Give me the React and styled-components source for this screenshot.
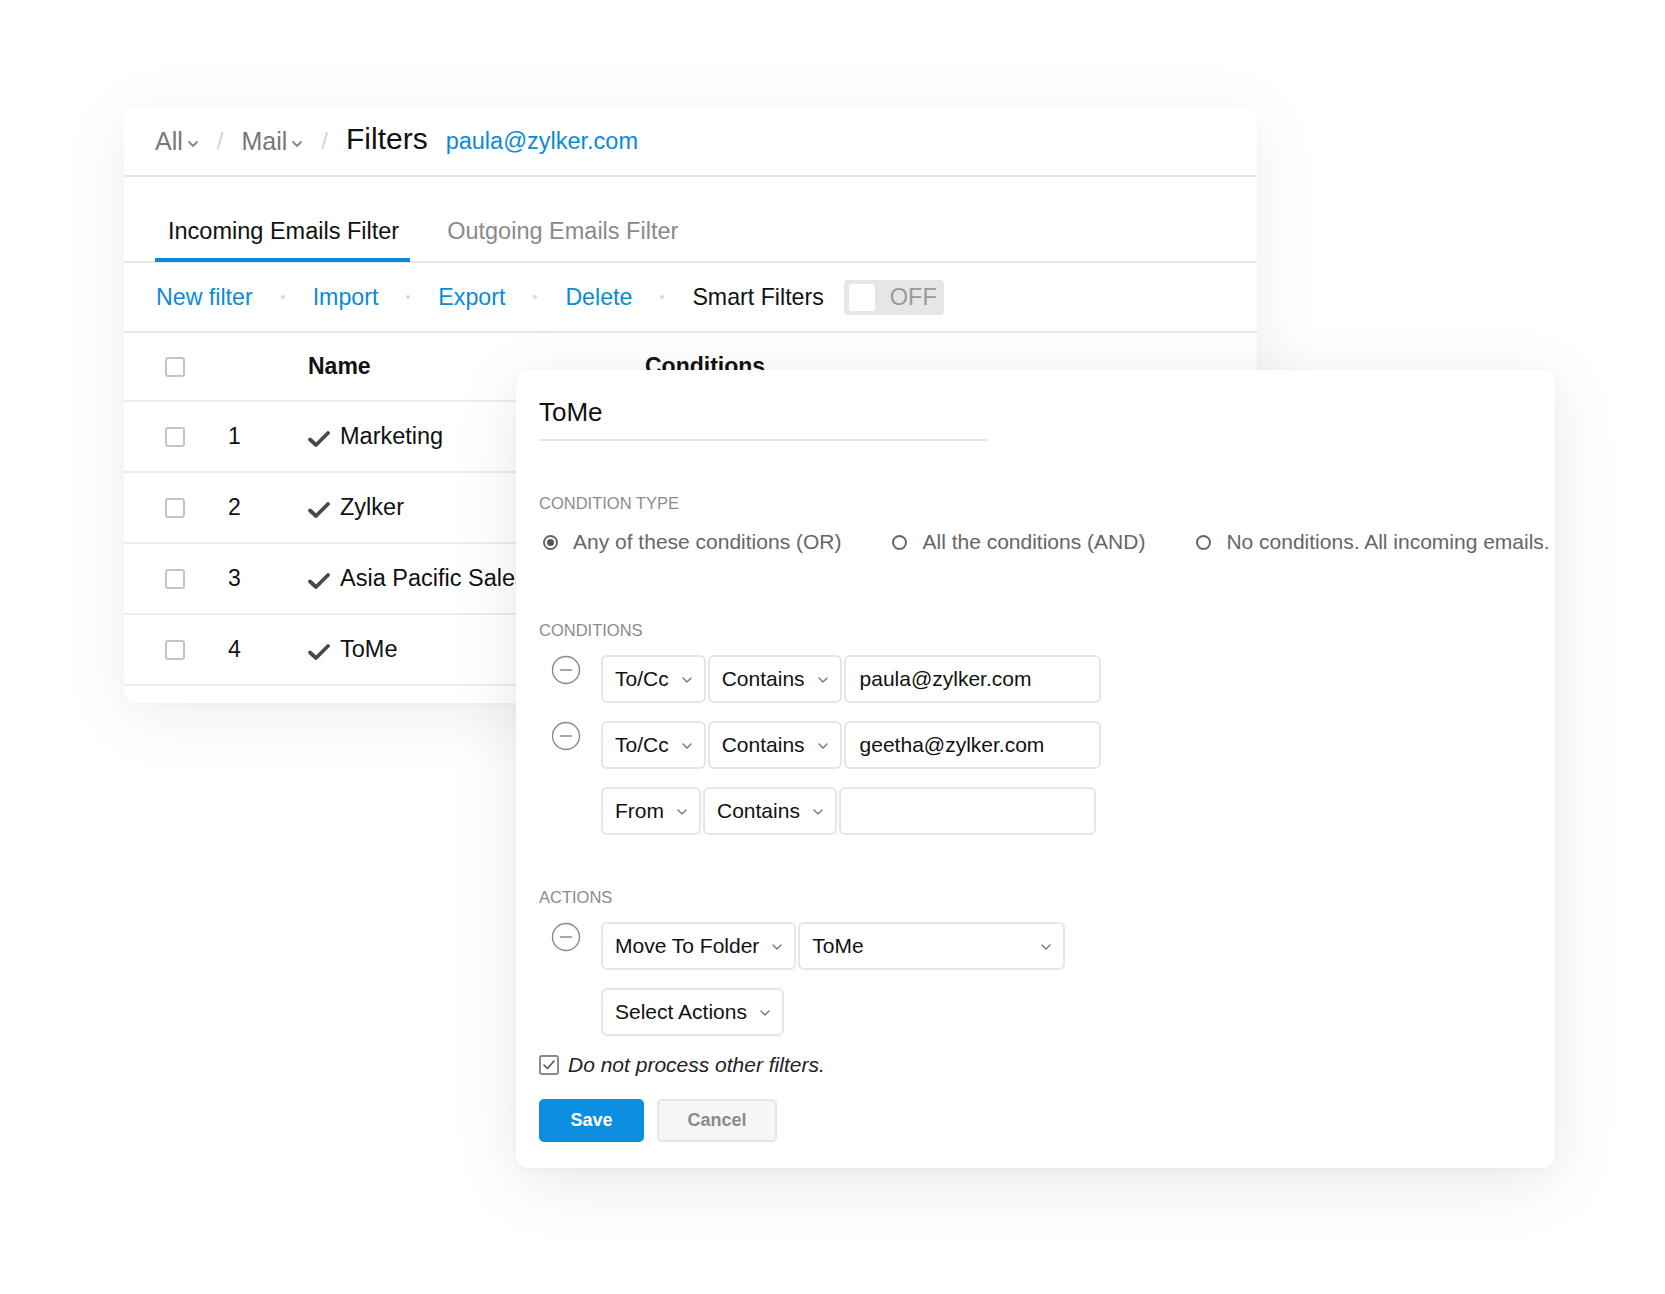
import React from 'react';
import styled, { createGlobalStyle } from 'styled-components';

const GlobalStyle = createGlobalStyle`
  html, body {
    margin: 0;
    padding: 0;
    background: #ffffff;
  }
  body {
    font-family: "Liberation Sans", Arial, Helvetica, sans-serif;
    color: #111;
  }
`;

const BLUE = '#0b8ad9';

const rows = [
    { id: 1, name: 'Marketing' },
    { id: 2, name: 'Zylker' },
    { id: 3, name: 'Asia Pacific Sales' },
    { id: 4, name: 'ToMe' },
];

const conditions = [
    { field: 'To/Cc', op: 'Contains', value: 'paula@zylker.com', removable: true },
    { field: 'To/Cc', op: 'Contains', value: 'geetha@zylker.com', removable: true },
    { field: 'From', op: 'Contains', value: '', removable: false },
];

//small icons
const Chevron = ({ size = 10, color = '#777', weight = 1.4 }) => (
    <svg width={size} height={size * 0.6} viewBox="0 0 10 6" fill="none">
        <polyline points="1,1 5,5 9,1" stroke={color} strokeWidth={weight} strokeLinecap="round" strokeLinejoin="round" />
    </svg>
);

const Tick = () => (
    <svg width="22" height="18" viewBox="0 0 22 18" fill="none">
        <polyline points="2,9.5 8,15 20,3" stroke="#4a4a4a" strokeWidth="3.8" strokeLinecap="round" strokeLinejoin="round" />
    </svg>
);

const MinusCircle = () => (
    <svg width="30" height="30" viewBox="0 0 30 30" fill="none">
        <circle cx="15" cy="15" r="13.5" stroke="#8a8a8a" strokeWidth="1.4" />
        <line x1="9.5" y1="15" x2="20.5" y2="15" stroke="#8a8a8a" strokeWidth="1.6" strokeLinecap="round" />
    </svg>
);

const App = () => {
    return (
        <>
            <GlobalStyle />
            <Stage>
                <FilterCard>
                    <Header>
                        <Crumb>All<Chevron color="#888" weight={1.8} /></Crumb>
                        <Slash>/</Slash>
                        <Crumb>Mail<Chevron color="#888" weight={1.8} /></Crumb>
                        <Slash>/</Slash>
                        <PageTitle>Filters</PageTitle>
                        <Account>paula@zylker.com</Account>
                    </Header>

                    <Tabs>
                        <Tab active>Incoming Emails Filter</Tab>
                        <Tab>Outgoing Emails Filter</Tab>
                    </Tabs>

                    <Toolbar>
                        <ActionLink>New filter</ActionLink>
                        <Dot />
                        <ActionLink>Import</ActionLink>
                        <Dot />
                        <ActionLink>Export</ActionLink>
                        <Dot />
                        <ActionLink>Delete</ActionLink>
                        <Dot />
                        <SmartLabel>Smart Filters</SmartLabel>
                        <Toggle>
                            <Knob />
                            <span>OFF</span>
                        </Toggle>
                    </Toolbar>

                    <TableRow head>
                        <Box />
                        <span />
                        <HeadCell>Name</HeadCell>
                        <HeadCell>Conditions</HeadCell>
                    </TableRow>
                    {rows.map((r) => (
                        <TableRow key={r.id}>
                            <Box />
                            <Num>{r.id}</Num>
                            <NameCell><Tick />{r.name}</NameCell>
                            <span />
                        </TableRow>
                    ))}
                </FilterCard>

                <EditCard>
                    <FilterName>ToMe</FilterName>

                    <SectionLabel top={52}>Condition Type</SectionLabel>
                    <RadioGroup>
                        <Radio><RadioMark checked />Any of these conditions (OR)</Radio>
                        <Radio><RadioMark />All the conditions (AND)</Radio>
                        <Radio><RadioMark />No conditions. All incoming emails.</Radio>
                    </RadioGroup>

                    <SectionLabel top={65}>Conditions</SectionLabel>
                    <RuleList>
                        {conditions.map((c, i) => (
                            <Rule key={i}>
                                <RemoveSlot>{c.removable && <MinusCircle />}</RemoveSlot>
                                <Fields>
                                    <Select>{c.field}<Chevron /></Select>
                                    <Select>{c.op}<Chevron /></Select>
                                    <Input>{c.value}</Input>
                                </Fields>
                            </Rule>
                        ))}
                    </RuleList>

                    <SectionLabel top={52}>Actions</SectionLabel>
                    <RuleList>
                        <Rule>
                            <RemoveSlot><MinusCircle /></RemoveSlot>
                            <Fields>
                                <Select>Move To Folder<Chevron /></Select>
                                <Select wide={267}>ToMe<Chevron /></Select>
                            </Fields>
                        </Rule>
                        <Rule>
                            <RemoveSlot />
                            <Fields>
                                <Select>Select Actions<Chevron /></Select>
                            </Fields>
                        </Rule>
                    </RuleList>

                    <CheckLine>
                        <CheckBox>
                            <svg width="14" height="12" viewBox="0 0 14 12" fill="none">
                                <polyline points="2,6 5.5,9.5 12,2" stroke="#555" strokeWidth="1.6" strokeLinecap="round" strokeLinejoin="round" />
                            </svg>
                        </CheckBox>
                        Do not process other filters.
                    </CheckLine>

                    <Buttons>
                        <Button primary>Save</Button>
                        <Button>Cancel</Button>
                    </Buttons>
                </EditCard>
            </Stage>
        </>
    );
}

const Stage = styled.div`
  position: relative;
  width: 1665px;
  height: 1294px;
  padding: 107px 0 0 124px;
  box-sizing: border-box;
  overflow: hidden;
  background: #fff;
`
const FilterCard = styled.div`
  width: 1133px;
  height: 596px;
  background: #fff;
  border-radius: 14px;
  box-shadow: 0 12px 70px rgba(0, 0, 0, 0.07), 0 2px 10px rgba(0, 0, 0, 0.02);
  overflow: hidden;
`
const Header = styled.div`
  height: 68px;
  display: flex;
  align-items: center;
  padding-left: 31px;
  border-bottom: 2px solid #e6e6e6;
`
const Crumb = styled.span`
  display: inline-flex;
  align-items: center;
  gap: 5px;
  font-size: 25px;
  color: #777;
  svg { margin-top: 5px; }
`
const Slash = styled.span`
  font-size: 24px;
  color: #d3d3d3;
  margin: 0 18px 0 19px;
`
const PageTitle = styled.span`
  font-size: 30px;
  color: #111;
  margin-top: -4px;
`
const Account = styled.span`
  font-size: 23.5px;
  color: ${BLUE};
  margin-left: 18px;
`
const Tabs = styled.div`
  height: 84px;
  display: flex;
  align-items: flex-end;
  padding-left: 31px;
  gap: 24px;
  border-bottom: 2px solid #e6e6e6;
`
const Tab = styled.div`
  font-size: 23.5px;
  color: ${p => p.active ? '#111' : '#8a8a8a'};
  padding: 0 11px 13px 13px;
  border-bottom: 4px solid ${p => p.active ? BLUE : 'transparent'};
  margin-bottom: -1px;
`
const Toolbar = styled.div`
  height: 68px;
  display: flex;
  align-items: center;
  gap: 28px;
  padding-left: 32px;
  border-bottom: 2px solid #e6e6e6;
`
const ActionLink = styled.span`
  font-size: 23.2px;
  color: ${BLUE};
`
const Dot = styled.span`
  width: 4px;
  height: 4px;
  border-radius: 50%;
  background: #d8d8d8;
`
const SmartLabel = styled.span`
  font-size: 23.2px;
  color: #111;
  margin-right: -8px;
`
const Toggle = styled.div`
  width: 100px;
  height: 35px;
  box-sizing: border-box;
  background: #e6e6e6;
  border-radius: 4px;
  display: flex;
  align-items: center;
  padding-left: 5px;
  gap: 15px;
  font-size: 23.5px;
  color: #9a9a9a;
`
const Knob = styled.span`
  width: 26px;
  height: 27px;
  background: #fff;
  border-radius: 3px;
`
const TableRow = styled.div`
  display: grid;
  grid-template-columns: 63px 80px 337px 1fr;
  align-items: center;
  height: ${p => p.head ? 67 : 69}px;
  padding-left: 41px;
  border-bottom: 2px solid #ededed;
`
const Box = styled.span`
  width: 20px;
  height: 20px;
  box-sizing: border-box;
  border: 2px solid #c4c4c4;
  border-radius: 3px;
`
const HeadCell = styled.span`
  font-size: 23px;
  font-weight: 700;
  color: #111;
`
const Num = styled.span`
  font-size: 23px;
  color: #111;
`
const NameCell = styled.span`
  display: flex;
  align-items: center;
  gap: 10px;
  font-size: 23.5px;
  color: #111;
  white-space: nowrap;
  svg { margin-top: 5px; }
`
const EditCard = styled.div`
  position: absolute;
  left: 516px;
  top: 370px;
  width: 1039px;
  height: 798px;
  box-sizing: border-box;
  padding: 26px 23px 27px;
  background: #fff;
  border-radius: 14px;
  box-shadow: 0 14px 70px rgba(0, 0, 0, 0.09), 0 2px 12px rgba(0, 0, 0, 0.03);
`
const FilterName = styled.div`
  width: 449px;
  font-size: 26px;
  line-height: 32px;
  color: #111;
  padding-bottom: 11px;
  border-bottom: 2px solid #e8e8e8;
`
const SectionLabel = styled.div`
  margin-top: ${p => p.top}px;
  font-size: 16.5px;
  line-height: 20px;
  color: #8c8c8c;
  text-transform: uppercase;
`
const RadioGroup = styled.div`
  display: flex;
  gap: 47px;
  margin-top: 16px;
  white-space: nowrap;
`
const Radio = styled.label`
  display: flex;
  align-items: center;
  gap: 15px;
  font-size: 21px;
  line-height: 26px;
  color: #666;
  padding-left: 4px;
`
const RadioMark = styled.span`
  width: 15px;
  height: 15px;
  flex-shrink: 0;
  box-sizing: border-box;
  border-radius: 50%;
  border: 2px solid #666;
  display: flex;
  align-items: center;
  justify-content: center;
  &::after {
    content: '';
    width: 7px;
    height: 7px;
    border-radius: 50%;
    background: ${p => p.checked ? '#555' : 'transparent'};
  }
`
const RuleList = styled.div`
  display: flex;
  flex-direction: column;
  gap: 18px;
  margin-top: 15px;
`
const Rule = styled.div`
  display: flex;
`
const RemoveSlot = styled.div`
  width: 62px;
  padding: 0 0 0 12px;
  box-sizing: border-box;
`
const Fields = styled.div`
  display: flex;
  gap: 2px;
`
const Select = styled.div`
  height: 48px;
  box-sizing: border-box;
  ${p => p.wide ? `width: ${p.wide}px; justify-content: space-between;` : ''}
  display: flex;
  align-items: center;
  gap: 13px;
  padding: 0 12px 0 12px;
  border: 2px solid #e6e6e6;
  border-radius: 6px;
  font-size: 21px;
  color: #111;
  svg { margin-top: 2px; }
`
const Input = styled.div`
  width: 257px;
  height: 48px;
  box-sizing: border-box;
  display: flex;
  align-items: center;
  padding: 0 14px;
  border: 2px solid #e6e6e6;
  border-radius: 6px;
  font-size: 21px;
  color: #111;
`
const CheckLine = styled.label`
  display: flex;
  align-items: center;
  gap: 9px;
  margin-top: 16px;
  font-size: 21px;
  line-height: 26px;
  font-style: italic;
  color: #222;
`
const CheckBox = styled.span`
  width: 20px;
  height: 20px;
  box-sizing: border-box;
  border: 2px solid #8a8a8a;
  border-radius: 3px;
  display: flex;
  align-items: center;
  justify-content: center;
`
const Buttons = styled.div`
  display: flex;
  gap: 13px;
  margin-top: 21px;
`
const Button = styled.button`
  height: 43px;
  width: ${p => p.primary ? 105 : 120}px;
  border-radius: 5px;
  border: 2px solid ${p => p.primary ? '#0b8ee0' : '#e6e6e6'};
  background: ${p => p.primary ? '#0b8ee0' : '#f6f6f6'};
  color: ${p => p.primary ? '#fff' : '#8a8a8a'};
  font-family: "Liberation Sans", Arial, sans-serif;
  font-size: 18px;
  font-weight: 700;
`

export default App;
